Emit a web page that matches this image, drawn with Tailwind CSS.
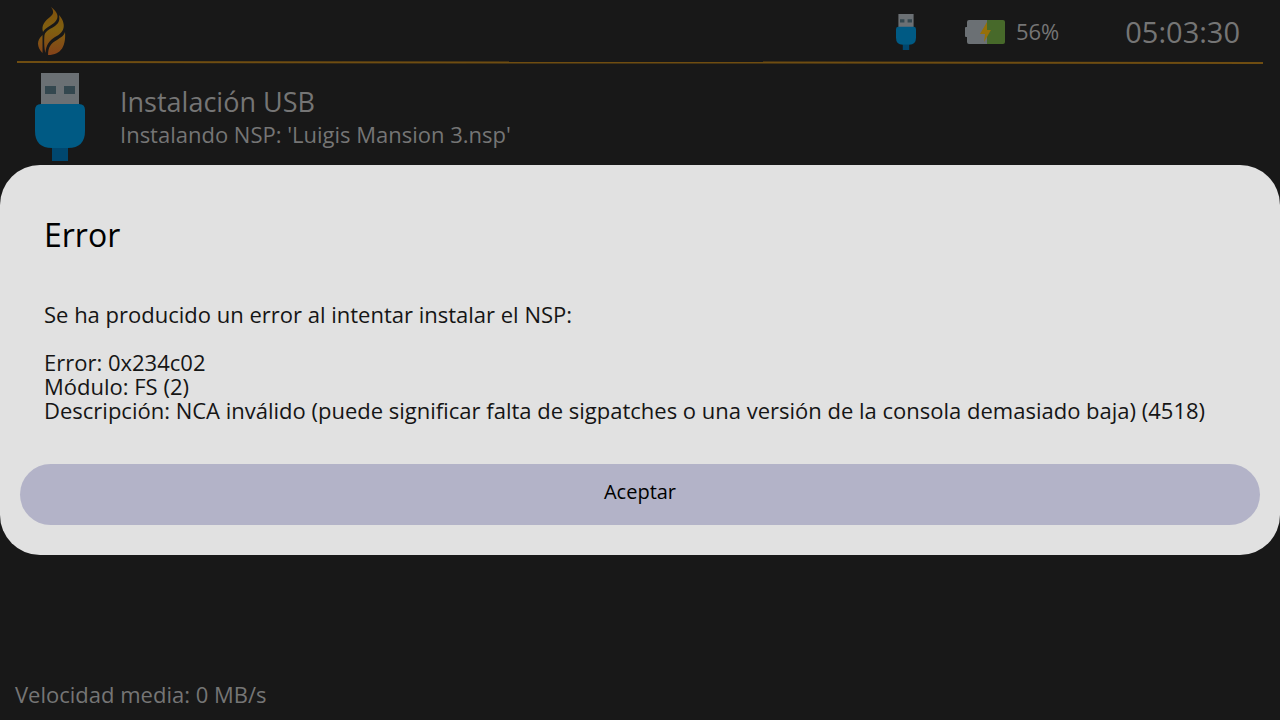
<!DOCTYPE html>
<html lang="es">
<head>
<meta charset="utf-8">
<meta name="viewport" content="width=device-width, initial-scale=1">
<title>Instalación USB</title>
<script src="https://cdn.jsdelivr.net/npm/@tailwindcss/browser@4"></script>
</head>
<body class="relative flex min-h-screen flex-col bg-[#181818] font-['Open_Sans','Noto_Sans',sans-serif] text-[22px] text-[#757575]">
  <header class="flex h-[61px] items-center pt-[2px] pr-10 pl-[37px]">
    <svg class="h-[50px] w-[30px]" viewBox="0 0 30 50" aria-label="Logo">
      <defs><linearGradient id="flame" x1="0" y1="0" x2="0" y2="50" gradientUnits="userSpaceOnUse"><stop offset="0" stop-color="#80500c"/><stop offset=".45" stop-color="#806010"/><stop offset="1" stop-color="#85401a"/></linearGradient></defs>
      <g fill="url(#flame)">
        <path d="M14 0C21 5 23 11 17 16C12 20 8 21 6 25C4 18 8 14 13 10C17 7 17 4 14 0Z"/>
        <path d="M22 8C29 16 29 25 18 30C12 34 9 38 8.500 46C7 41 7 33 7.500 28C9 23 14 22 18 19C22 16 23 13 22 8Z"/>
        <path d="M28 25C29 38 25 48 11 48C11 40 14 36 20 33C24 30 27 29 28 25Z"/>
        <path d="M5.500 28L5.500 46C0 40-1 34 5.500 28Z"/>
      </g>
    </svg>
    <svg class="ml-auto h-9 w-5" viewBox="0 0 50 88" preserveAspectRatio="none" aria-label="USB"><path fill="#6b7074" d="M6 0h38v34H6z"/><path fill="#34474f" d="M10 13h11v8H10zM29 13h11v8H29z"/><path fill="#00476f" d="M17 74h16v14H17z"/><path fill="#005a84" d="M6 31h38q6 0 6 6v21q0 17-17 17H17Q0 75 0 58V37q0-6 6-6z"/></svg>
    <svg class="ml-[49px] h-6 w-10" viewBox="0 0 40 24" aria-label="Batería"><path fill="#6b7074" d="M22 0H4Q2 0 2 2v5H1Q0 7 0 8v8q0 1 1 1h1v5q0 2 2 2h18z"/><path fill="#47692a" d="M22 0h16q2 0 2 2v20q0 2-2 2H22z"/><path fill="#967009" d="M22 2L15 14h5l-1 8 7-12h-4z"/></svg>
    <span class="ml-[11px]">56%</span>
    <time class="ml-[66px] text-[29px]">05:03:30</time>
  </header>
  <svg class="mx-[17px] h-[3px] w-auto self-stretch" viewBox="0 0 1246 3" preserveAspectRatio="none" aria-hidden="true"><path fill="#6f4d11" d="M0 0L1246 1v2L0 2z"/></svg>
  <main class="flex gap-[35px] pt-[9px] pl-[35px]">
    <svg class="h-[88px] w-[50px]" viewBox="0 0 50 88" aria-hidden="true"><path fill="#6b7074" d="M6 0h38v34H6z"/><path fill="#34474f" d="M10 13h11v8H10zM29 13h11v8H29z"/><path fill="#00476f" d="M17 74h16v14H17z"/><path fill="#005a84" d="M6 31h38q6 0 6 6v21q0 17-17 17H17Q0 75 0 58V37q0-6 6-6z"/></svg>
    <div class="pt-[11px]">
      <h1 class="text-[27px] leading-9">Instalación USB</h1>
      <p class="leading-7">Instalando NSP: 'Luigis Mansion 3.nsp'</p>
    </div>
  </main>
  <footer class="mt-auto px-[15px] pb-[10px] leading-8">Velocidad media: 0 MB/s</footer>

  <div class="absolute inset-0 flex items-center">
    <section role="alertdialog" aria-labelledby="title" aria-describedby="message" class="w-full rounded-[40px] bg-[#e1e1e1] px-5 pt-12 pb-[30px] text-[#151515]">
      <h2 id="title" class="px-6 text-[32px] leading-[44px] text-black">Error</h2>
      <div id="message" class="px-6 pt-[45px] leading-6">
        <p class="pb-6">Se ha producido un error al intentar instalar el NSP:</p>
        <p>Error: 0x234c02</p>
        <p>Módulo: FS (2)</p>
        <p>Descripción: NCA inválido (puede significar falta de sigpatches o una versión de la consola demasiado baja) (4518)</p>
      </div>
      <button type="button" class="mt-[42px] flex h-[61px] w-full items-center justify-center rounded-full bg-[#b3b3c8] pb-[5px] text-[20px] text-black">Aceptar</button>
    </section>
  </div>
</body>
</html>
